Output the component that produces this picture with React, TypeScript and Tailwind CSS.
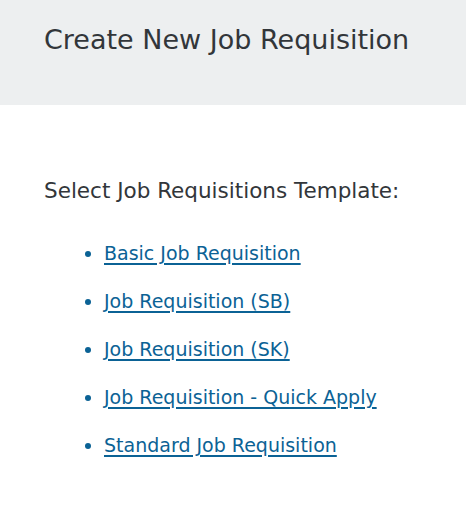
const templates = [
  "Basic Job Requisition",
  "Job Requisition (SB)",
  "Job Requisition (SK)",
  "Job Requisition - Quick Apply",
  "Standard Job Requisition",
];

export default function App() {
  return (
    <div
      className="min-h-screen bg-white text-[#32363a]"
      style={{ fontFamily: '"DejaVu Sans", "Liberation Sans", sans-serif' }}
    >
      <header className="h-[105px] bg-[#edeff0] px-[44px] pt-[22px]">
        <h1 className="text-[27px] leading-[36px]">Create New Job Requisition</h1>
      </header>

      <main className="px-[44px] pt-[72px]">
        <p className="text-[21.5px] leading-[28px]">Select Job Requisitions Template:</p>

        <ul className="mt-[36px] flex flex-col gap-[23px] pl-[60px] list-disc marker:text-[#0b6295]">
          {templates.map((t) => (
            <li key={t} className="text-[19px] leading-[25px]">
              <a
                href="#"
                className="text-[#0b6295] underline decoration-2 underline-offset-[3px]"
              >
                {t}
              </a>
            </li>
          ))}
        </ul>
      </main>
    </div>
  );
}
